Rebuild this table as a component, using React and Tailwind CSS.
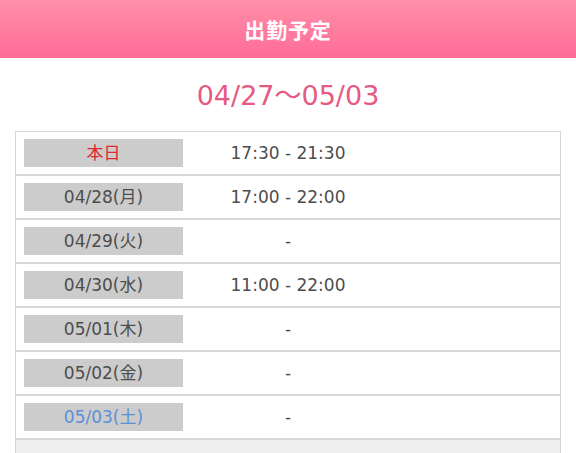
import React from 'react';

const rows = [
    { label: '本日', time: '17:30 - 21:30', tone: 'text-[#e5262f]' },
    { label: '04/28(月)', time: '17:00 - 22:00' },
    { label: '04/29(火)', time: '-' },
    { label: '04/30(水)', time: '11:00 - 22:00' },
    { label: '05/01(木)', time: '-' },
    { label: '05/02(金)', time: '-' },
    { label: '05/03(土)', time: '-', tone: 'text-[#5b8fd8]' },
];

const App = () => {
    return (
        <div className="w-[576px] h-[453px] overflow-hidden bg-white font-['DejaVu_Sans','Noto_Sans_CJK_JP',sans-serif]">
            {/* Header bar */}
            <div className="h-[58px] flex items-center justify-center bg-gradient-to-b from-[#ff8fa9] to-[#ff6b96]">
                <h1 className="font-['Noto_Sans_CJK_JP',sans-serif] text-[21px] font-bold text-white tracking-[0.04em] leading-none">出勤予定</h1>
            </div>

            {/* Week range */}
            <div className="h-[73px] flex items-center justify-center pt-[2px]">
                <p className="text-[27px] text-[#e55a82] leading-none">04/27～05/03</p>
            </div>

            {/* Schedule table */}
            <div className="mx-[15px] border-x border-t border-[#d6d6d6]">
                {rows.map((row) => (
                    <div key={row.label} className="h-[44px] flex items-center border-b-2 border-[#d9d9d9]">
                        <div className="ml-[8px] w-[159px] h-[28px] bg-[#cccccc] flex items-center justify-center">
                            <span className={`text-[17px] leading-none ${row.tone || 'text-[#4d4d4d]'}`}>{row.label}</span>
                        </div>
                        <div className="w-[210px] text-center text-[17px] leading-none text-[#4d4d4d]">
                            {row.time}
                        </div>
                    </div>
                ))}
                <div className="h-[20px] bg-[#eeeeee]" />
            </div>
        </div>
    );
};

export default App;
